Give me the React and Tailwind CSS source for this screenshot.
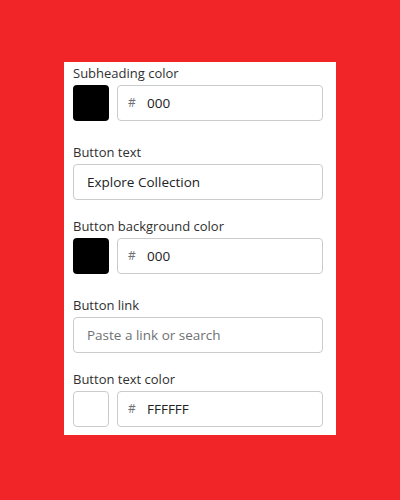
const FONT = { fontFamily: '"Open Sans", "Noto Sans", sans-serif' }

function Label({ children }) {
  return <p className="text-[13px] leading-[20px] text-[#303030] mb-[2px]">{children}</p>
}

function ColorField({ label, hex, swatch, last }) {
  return (
    <div className={last ? '' : 'mb-[21px]'}>
      <Label>{label}</Label>
      <div className="flex items-center gap-2">
        <div
          className={`w-9 h-9 rounded-[4px] shrink-0 ${swatch === 'white' ? 'bg-white border border-[#c9cccf]' : 'bg-black'}`}
        />
        <div className="flex-1 h-9 flex items-center border border-[#c9cccf] rounded-[4px] pl-[10px]">
          <span className="text-[12px] text-[#6d7175] w-[19px]">#</span>
          <span className="text-[13.5px] text-[#202223]">{hex}</span>
        </div>
      </div>
    </div>
  )
}

function TextField({ label, value, placeholder }) {
  return (
    <div className="mb-[16px]">
      <Label>{label}</Label>
      <div className="h-9 flex items-center border border-[#c9cccf] rounded-[4px] px-[13px]">
        {value ? (
          <span className="text-[13.5px] text-[#202223]">{value}</span>
        ) : (
          <span className="text-[13.5px] text-[#6d7175]">{placeholder}</span>
        )}
      </div>
    </div>
  )
}

export default function App() {
  return (
    <div className="w-[400px] h-[500px] bg-[#f12427] flex items-center justify-center" style={FONT}>
      <div className="w-[272px] bg-white pl-[9px] pr-[13px] pt-[1px] pb-[8px] mb-[3px]">
        <ColorField label="Subheading color" hex="000" swatch="black" />
        <TextField label="Button text" value="Explore Collection" />
        <ColorField label="Button background color" hex="000" swatch="black" />
        <TextField label="Button link" placeholder="Paste a link or search" />
        <ColorField label="Button text color" hex="FFFFFF" swatch="white" last />
      </div>
    </div>
  )
}
